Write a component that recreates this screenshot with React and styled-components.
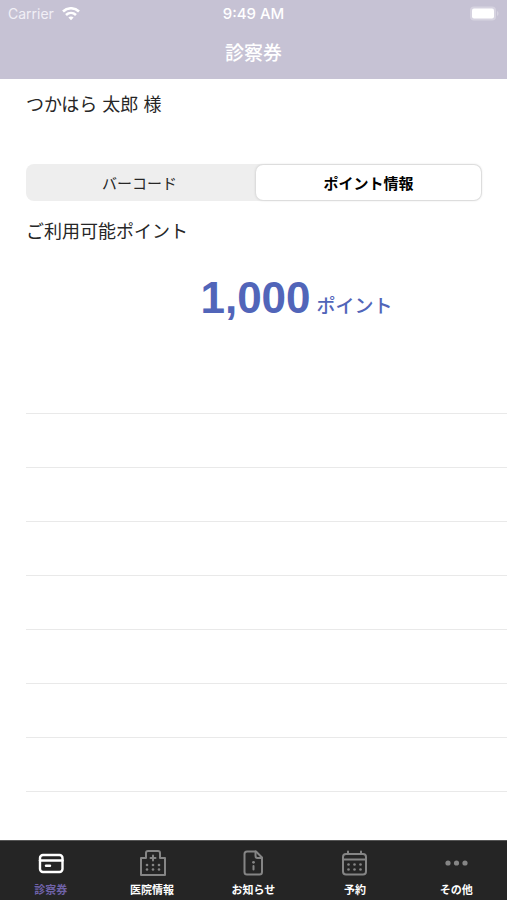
import React, { useState } from "react";
import styled, { createGlobalStyle } from "styled-components";

const GlobalStyle = createGlobalStyle`
  *, *::before, *::after { box-sizing: border-box; }
  body {
    margin: 0;
    background: #fff;
    color: #262626;
    font-family: "Inter", "Noto Sans CJK JP", sans-serif;
  }
`;

const Screen = styled.div`
  display: flex;
  flex-direction: column;
  min-height: 100vh;
`;

const Header = styled.header`
  background: #c6c2d4;
  color: #fff;
`;

const StatusBar = styled.div`
  display: grid;
  grid-template-columns: 1fr auto 1fr;
  align-items: center;
  height: 28px;
  padding: 0 8px;
  font-size: 14px;
  line-height: 20px;
`;

const Carrier = styled.div`
  display: flex;
  align-items: center;
  gap: 8px;
  color: #f1eff6;
`;

const Time = styled.time`
  font-size: 15px;
  font-weight: 500;
`;

const BatteryIcon = styled.svg`
  justify-self: end;
`;

const Title = styled.h1`
  margin: 0;
  padding: 11px 0 10px;
  font-size: 19px;
  line-height: 30px;
  font-weight: 500;
  text-align: center;
`;

const Main = styled.main`
  display: flex;
  flex: 1;
  flex-direction: column;
  padding-left: 26px;
`;

const Text = styled.p`
  margin: 0;
  font-size: 18px;
  line-height: 28px;
`;

const PatientName = styled(Text)`
  padding: 12px 0 45px;
`;

const Segments = styled.div`
  display: grid;
  grid-template-columns: 1fr 1fr;
  gap: 4px;
  height: 37px;
  margin: 0 25px 17px 0;
  padding: 1px;
  border-radius: 8px;
  background: #eeeeee;
`;

const Segment = styled.button`
  border: 0;
  border-radius: 7px;
  padding: 2px 0 0;
  background: ${(p) => (p.$active ? "#fff" : "transparent")};
  box-shadow: ${(p) => (p.$active ? "0 0 3px rgba(0, 0, 0, 0.2)" : "none")};
  color: ${(p) => (p.$active ? "#000" : "#262626")};
  font-family: inherit;
  font-size: 15px;
  line-height: 24px;
  font-weight: ${(p) => (p.$active ? 700 : 400)};
`;

const Balance = styled.p`
  display: flex;
  align-items: baseline;
  justify-content: center;
  gap: 6px;
  margin: 22px 0 76px;
  padding-left: 60px;
  color: #5165b9;
  line-height: 60px;
`;

const Amount = styled.strong`
  font-family: "Liberation Sans", Arial, sans-serif;
  font-size: 44px;
`;

const Unit = styled.span`
  font-size: 19px;
  font-weight: 500;
`;

const History = styled.ul`
  flex: 1;
  margin: 0;
  padding: 0;
  list-style: none;
`;

const HistoryRow = styled.li`
  height: 54px;
  border-top: 1px solid #e9e9e9;

  &:last-child { height: 48px; }
`;

const TabBar = styled.nav`
  display: grid;
  grid-template-columns: repeat(5, 1fr);
  height: 60px;
  border-top: 1px solid #555;
  background: #252525;
`;

const Tab = styled.a`
  display: flex;
  flex-direction: column;
  align-items: center;
  padding-top: 8px;
  gap: 5px;
  color: ${(p) => (p.$active ? "#6f62a8" : "#fff")};
  font-size: 11px;
  line-height: 16px;
  font-weight: 700;
  text-decoration: none;
`;

const TabIcon = styled.svg`
  color: ${(p) => (p.$active ? "#fff" : "#858585")};
  fill: none;
  stroke: currentColor;
  stroke-width: 2;
  stroke-linecap: round;
  stroke-linejoin: round;
`;

const Dot = styled.circle`
  fill: currentColor;
  stroke: none;
`;

function Wifi() {
  return (
    <svg width="18" height="14" viewBox="0 0 18 14" fill="none" stroke="#fff" strokeWidth="2.6" aria-hidden="true">
      <path d="M1 4.500C5.500 .2 12.500 .2 17 4.500" />
      <path d="M4 8c2.900-2.700 7.100-2.700 10 0" />
      <path d="M6.400 10.500c1.500-1.300 3.700-1.300 5.200 0L9 13.200Z" fill="#fff" stroke="none" />
    </svg>
  );
}

function Battery() {
  return (
    <BatteryIcon width="30" height="16" viewBox="0 0 30 16" aria-hidden="true">
      <rect x="1" y="0.500" width="26" height="14" rx="4" fill="#d6d3e0" />
      <path d="M28 5c2 .8 2 4.200 0 5Z" fill="#d6d3e0" />
      <rect x="3" y="2.500" width="22" height="10" rx="2" fill="#fff" />
    </BatteryIcon>
  );
}

const dotGrid = (xs, ys) =>
  ys.flatMap((y) => xs.map((x) => <Dot key={`${x}-${y}`} cx={x} cy={y} r="1.3" />));

const tabs = [
  {
    label: "診察券",
    icon: (
      <>
        <rect x="4" y="6" width="22.5" height="17" rx="3" strokeWidth="2.4" />
        <path d="M4 11.500h22.500" strokeWidth="2.4" />
        <path d="M10 16.800h4" strokeWidth="2.4" />
      </>
    ),
  },
  {
    label: "医院情報",
    icon: (
      <>
        <path d="M3 26V9H8V4q0-2 2-2h10q2 0 2 2v5h5V26Z" />
        <path d="M15 6.500v5M12.500 9h5" />
        {dotGrid([9, 15, 21], [16, 20.5])}
      </>
    ),
  },
  {
    label: "お知らせ",
    icon: (
      <>
        <path d="M8 2.500h9l6 6V23q0 2.500-2.500 2.500H8Q5.500 25.500 5.500 23V5Q5.500 2.500 8 2.500Z" />
        <path d="M16.500 2.500V7q0 2 2 2H23" />
        <path d="M14.500 17v3.500" />
        <Dot cx="14.5" cy="13.3" r="1.4" />
      </>
    ),
  },
  {
    label: "予約",
    icon: (
      <>
        <rect x="3" y="5" width="23" height="20.5" rx="3" />
        <path d="M3 10.500h23M8 2.500V5M21 2.500V5" />
        {dotGrid([8.5, 14.5, 20.5], [15.5, 20.5])}
      </>
    ),
  },
  {
    label: "その他",
    icon: (
      <>
        <Dot cx="6" cy="14" r="2.6" />
        <Dot cx="14.5" cy="14" r="2.6" />
        <Dot cx="23" cy="14" r="2.6" />
      </>
    ),
  },
];

const segments = ["バーコード", "ポイント情報"];
const historyRows = [1, 2, 3, 4, 5, 6, 7, 8];

export default function App() {
  const [selected, setSelected] = useState(1);

  return (
    <Screen lang="ja">
      <GlobalStyle />
      <Header>
        <StatusBar>
          <Carrier>
            Carrier
            <Wifi />
          </Carrier>
          <Time>9:49 AM</Time>
          <Battery />
        </StatusBar>
        <Title>診察券</Title>
      </Header>
      <Main>
        <PatientName>つかはら 太郎 様</PatientName>
        <Segments>
          {segments.map((label, i) => (
            <Segment
              key={label}
              type="button"
              aria-pressed={selected === i}
              $active={selected === i}
              onClick={() => setSelected(i)}
            >
              {label}
            </Segment>
          ))}
        </Segments>
        <Text>ご利用可能ポイント</Text>
        <Balance>
          <Amount>1,000</Amount>
          <Unit>ポイント</Unit>
        </Balance>
        <History>
          {historyRows.map((row) => (
            <HistoryRow key={row} />
          ))}
        </History>
      </Main>
      <TabBar>
        {tabs.map(({ label, icon }, i) => (
          <Tab key={label} href="#" $active={i === 0} aria-current={i === 0 ? "page" : undefined}>
            <TabIcon $active={i === 0} width="29" height="28" viewBox="0 0 29 28" aria-hidden="true">
              {icon}
            </TabIcon>
            {label}
          </Tab>
        ))}
      </TabBar>
    </Screen>
  );
}
